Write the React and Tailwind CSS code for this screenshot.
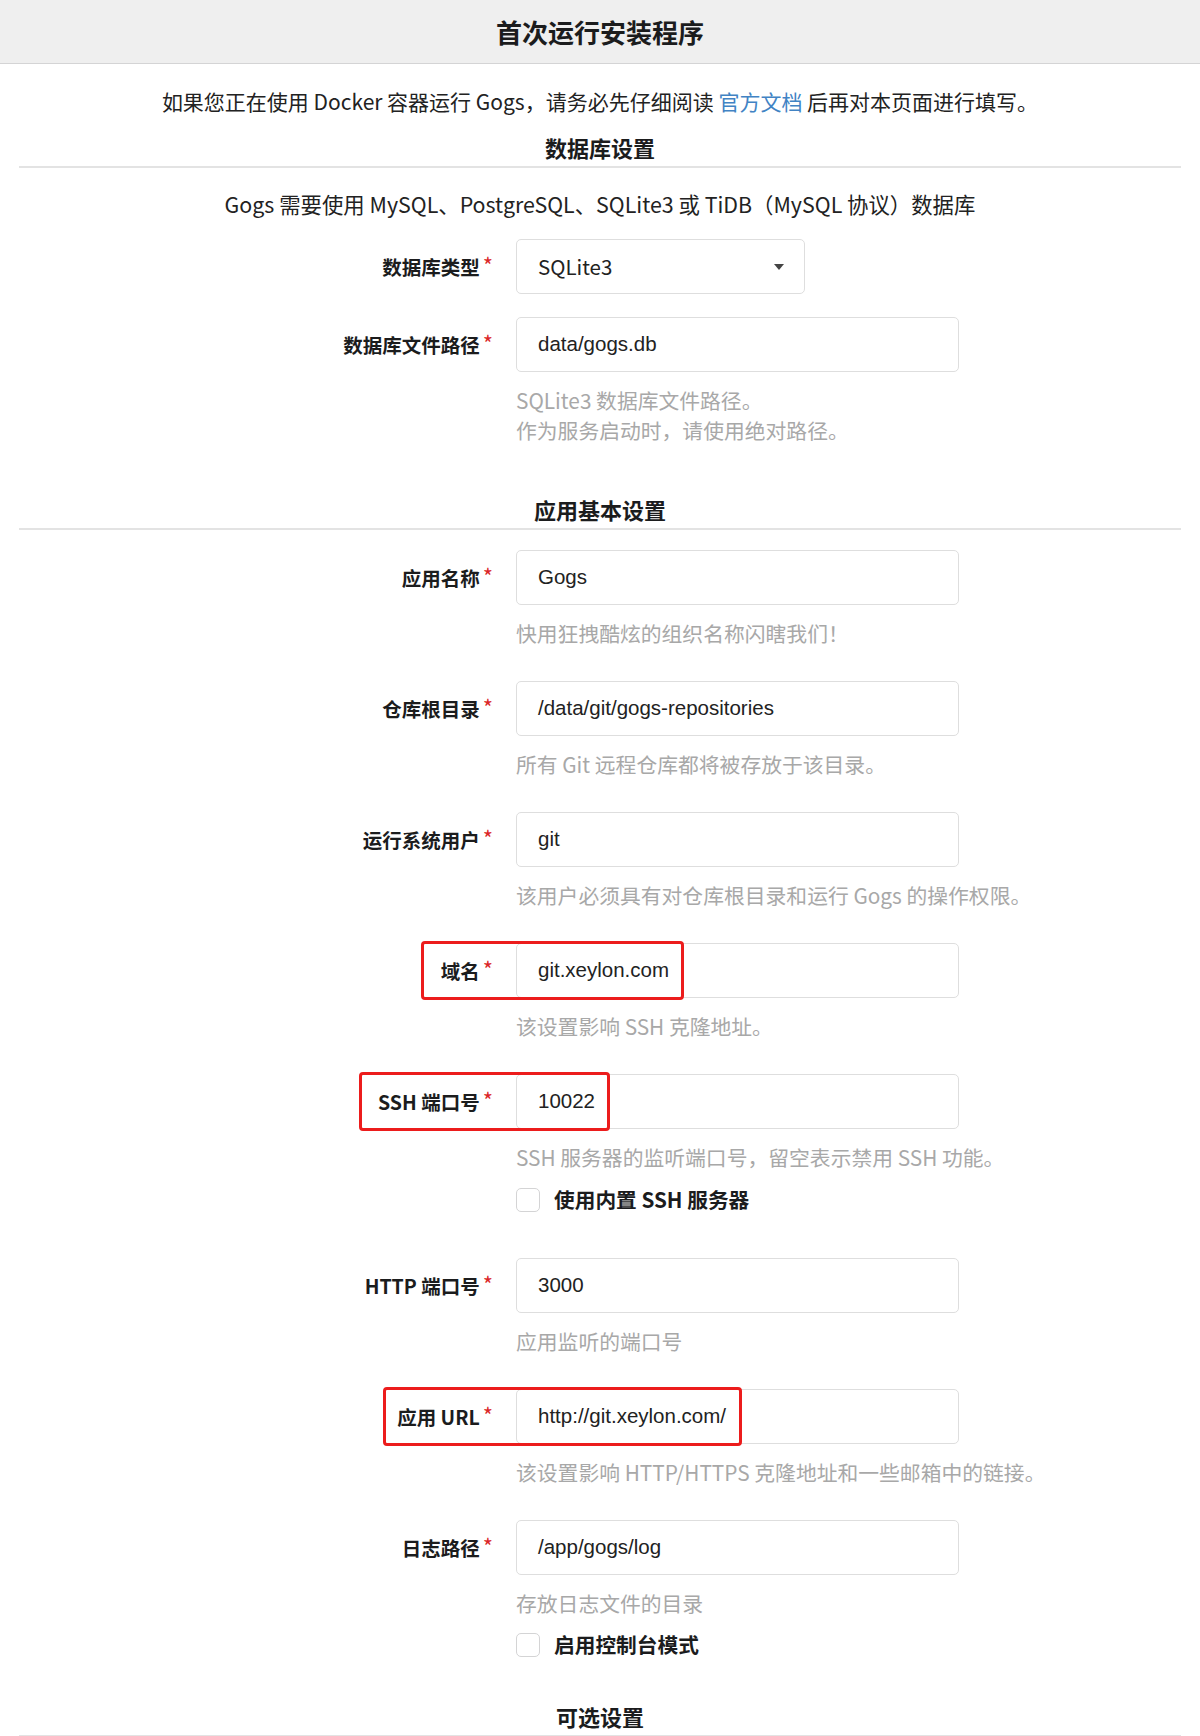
import React from "react";

const CJK = "font-['Noto_Sans_CJK_SC','Noto_Sans',sans-serif]";

const Label = ({ text }) => (
  <div className="w-[497px] shrink-0 flex justify-end pr-[23px]">
    <span className="flex items-start">
      <span className="text-[19.5px] leading-[30px] font-bold text-[#1b1c1d]">{text}</span>
      <span className="ml-[3px] mt-[1px] text-[22px] leading-[22px] text-[#db2828]">*</span>
    </span>
  </div>
);

// red annotation around label + input
const Mark = ({ left, width }) => (
  <div
    className="absolute top-[-2px] bottom-[-2px] border-[3px] border-[#ec1c1c] rounded-[4px] pointer-events-none"
    style={{ left, width }}
  />
);

const Field = ({ label, value, help = [], mark, className = "mb-[33px]" }) => (
  <div className={className}>
    <div className="relative flex items-center">
      <Label text={label} />
      <div className="w-[443px] h-[55px] border border-[#dedede] rounded-[5px] bg-white flex items-center px-[21px]">
        <span className="font-['Liberation_Sans','Noto_Sans_CJK_SC',sans-serif] text-[20.5px] text-[#222]">{value}</span>
      </div>
      {mark && <Mark left={mark.left} width={mark.width} />}
    </div>
    {help.length > 0 && (
      <div className="ml-[497px] mt-[13px] text-[20.8px] leading-[30px] text-[#a8a8a8]">
        {help.map((h) => (
          <div key={h}>{h}</div>
        ))}
      </div>
    )}
  </div>
);

const Check = ({ text, className }) => (
  <div className={`ml-[497px] flex items-center h-[30px] ${className}`}>
    <div className="w-[24px] h-[24px] border border-[#d4d4d5] rounded-[5px] bg-white" />
    <span className="ml-[14px] text-[20.7px] font-bold text-[#1b1c1d]">{text}</span>
  </div>
);

const Heading = ({ text, className }) => (
  <div className={`border-b-2 border-[#e3e3e3] pb-[4px] text-center ${className}`}>
    <span className="text-[22px] leading-[30px] font-bold text-[#1b1c1d]">{text}</span>
  </div>
);

export default function App() {
  return (
    <div className={`w-full bg-white ${CJK} text-[#222]`}>
      <div className="h-[64px] bg-[#efefef] border-b border-[#d4d4d5] flex items-center justify-center">
        <h1 className="text-[26px] font-bold text-[#1b1c1d]">首次运行安装程序</h1>
      </div>

      <div className="px-[19px]">
        <p className="mt-[22px] text-center text-[21px] leading-[30px]">
          如果您正在使用 Docker 容器运行 Gogs，请务必先仔细阅读 <span className="text-[#4183c4]">官方文档</span> 后再对本页面进行填写。
        </p>

        <Heading text="数据库设置" className="mt-[16px]" />
        <p className="mt-[21px] text-center text-[21.4px] leading-[30px]">
          Gogs 需要使用 MySQL、PostgreSQL、SQLite3 或 TiDB（MySQL 协议）数据库
        </p>

        <div className="mt-[20px] mb-[23px] flex items-center">
          <Label text="数据库类型" />
          <div className="w-[289px] h-[55px] border border-[#dedede] rounded-[5px] bg-white flex items-center justify-between pl-[21px] pr-[20px]">
            <span className="text-[20.5px] text-[#222]">SQLite3</span>
            <svg width="10" height="6" viewBox="0 0 10 6">
              <path d="M0 0h10L5 6z" fill="#444" />
            </svg>
          </div>
        </div>

        <Field
          label="数据库文件路径"
          value="data/gogs.db"
          help={["SQLite3 数据库文件路径。", "作为服务启动时，请使用绝对路径。"]}
          className="mb-0"
        />

        <Heading text="应用基本设置" className="mt-[49px] mb-[20px]" />

        <Field label="应用名称" value="Gogs" help={["快用狂拽酷炫的组织名称闪瞎我们！"]} />
        <Field label="仓库根目录" value="/data/git/gogs-repositories" help={["所有 Git 远程仓库都将被存放于该目录。"]} />
        <Field label="运行系统用户" value="git" help={["该用户必须具有对仓库根目录和运行 Gogs 的操作权限。"]} />
        <Field
          label="域名"
          value="git.xeylon.com"
          help={["该设置影响 SSH 克隆地址。"]}
          mark={{ left: 402, width: 263 }}
        />
        <Field
          label="SSH 端口号"
          value="10022"
          help={["SSH 服务器的监听端口号，留空表示禁用 SSH 功能。"]}
          mark={{ left: 340, width: 251 }}
          className="mb-0"
        />
        <Check text="使用内置 SSH 服务器" className="mt-[13px] mb-[43px]" />

        <Field label="HTTP 端口号" value="3000" help={["应用监听的端口号"]} />
        <Field
          label="应用 URL"
          value="http://git.xeylon.com/"
          help={["该设置影响 HTTP/HTTPS 克隆地址和一些邮箱中的链接。"]}
          mark={{ left: 364, width: 359 }}
        />
        <Field label="日志路径" value="/app/gogs/log" help={["存放日志文件的目录"]} className="mb-0" />
        <Check text="启用控制台模式" className="mt-[12px]" />

        <Heading text="可选设置" className="mt-[41px]" />
      </div>
    </div>
  );
}
